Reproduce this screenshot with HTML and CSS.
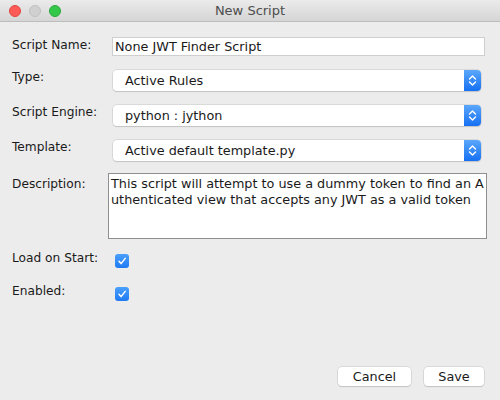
FILE: index.html
```html
<!DOCTYPE html>
<html>
<head>
<meta charset="utf-8">
<link rel="stylesheet" href="styles.css">
</head>
<body>
<div class="window">
  <div class="titlebar">
    <div class="lights">
      <span class="light red"></span>
      <span class="light gray"></span>
      <span class="light green"></span>
    </div>
    <div class="title">New Script</div>
  </div>
  <div class="form">
    <div class="row row-name">
      <label class="label">Script Name:</label>
      <div class="textfield">None JWT Finder Script</div>
    </div>
    <div class="row row-combo">
      <label class="label">Type:</label>
      <div class="combo"><span class="combo-text">Active Rules</span><span class="combo-btn"><svg width="9" height="13" viewBox="0 0 9 13"><path d="M1.5 5 L4.5 2 L7.5 5 M1.5 8 L4.5 11 L7.5 8" fill="none" stroke="#fff" stroke-width="1.4" stroke-linecap="round" stroke-linejoin="round"/></svg></span></div>
    </div>
    <div class="row row-combo">
      <label class="label">Script Engine:</label>
      <div class="combo"><span class="combo-text">python : jython</span><span class="combo-btn"><svg width="9" height="13" viewBox="0 0 9 13"><path d="M1.5 5 L4.5 2 L7.5 5 M1.5 8 L4.5 11 L7.5 8" fill="none" stroke="#fff" stroke-width="1.4" stroke-linecap="round" stroke-linejoin="round"/></svg></span></div>
    </div>
    <div class="row row-combo">
      <label class="label">Template:</label>
      <div class="combo"><span class="combo-text">Active default template.py</span><span class="combo-btn"><svg width="9" height="13" viewBox="0 0 9 13"><path d="M1.5 5 L4.5 2 L7.5 5 M1.5 8 L4.5 11 L7.5 8" fill="none" stroke="#fff" stroke-width="1.4" stroke-linecap="round" stroke-linejoin="round"/></svg></span></div>
    </div>
    <div class="row row-desc">
      <label class="label">Description:</label>
      <div class="textarea">This script will attempt to use a dummy token to find an A<br>uthenticated view that accepts any JWT as a valid token</div>
    </div>
    <div class="row row-check">
      <label class="label">Load on Start:</label>
      <span class="check"><svg width="14" height="14" viewBox="0 0 14 14"><path d="M4 7.3 L6.1 9.6 L10.2 4.4" fill="none" stroke="#fff" stroke-width="1.5" stroke-linecap="round" stroke-linejoin="round"/></svg></span>
    </div>
    <div class="row row-check">
      <label class="label">Enabled:</label>
      <span class="check"><svg width="14" height="14" viewBox="0 0 14 14"><path d="M4 7.3 L6.1 9.6 L10.2 4.4" fill="none" stroke="#fff" stroke-width="1.5" stroke-linecap="round" stroke-linejoin="round"/></svg></span>
    </div>
  </div>
  <div class="buttons">
    <button class="btn btn-cancel">Cancel</button>
    <button class="btn btn-save">Save</button>
  </div>
</div>
</body>
</html>
```
FILE: styles.css
```css
html, body {
  margin: 0;
  padding: 0;
  width: 500px;
  height: 400px;
  overflow: hidden;
  background: #ececec;
  font-family: "DejaVu Sans", "Liberation Sans", sans-serif;
  font-size: 12.2px;
  color: #1a1a1a;
}

.window {
  display: flex;
  flex-direction: column;
  height: 400px;
}

.titlebar {
  height: 21px;
  border-bottom: 1px solid #bdbdbd;
  background: linear-gradient(#ebebeb, #d5d5d5);
  display: flex;
  align-items: center;
  position: relative;
}

.lights {
  display: flex;
  gap: 8px;
  padding-left: 9px;
}

.light {
  width: 12px;
  height: 12px;
  border-radius: 50%;
  box-sizing: border-box;
}
.red { background: #fc5b57; border: 0.5px solid #e2463f; }
.gray { background: #d0d0d0; border: 0.5px solid #c0c0c0; }
.green { background: #34c84a; border: 0.5px solid #2aaa3a; }

.title {
  position: absolute;
  left: 0;
  right: 0;
  text-align: center;
  font-size: 13px;
  color: #4d4d4d;
  top: 3px;
}

.form {
  display: flex;
  flex-direction: column;
  padding-left: 12px;
}

.row {
  display: flex;
}

.label {
  width: 96px;
  flex: none;
  line-height: 16px;
}

.row-name {
  margin-top: 15px;
}

.textfield {
  margin-left: 4px;
  width: 369px;
  height: 17px;
  background: #fff;
  border: 1px solid #cfcfcf;
  line-height: 17px;
  padding-left: 2px;
  font-size: 12.8px;
}

.row-combo {
  margin-top: 14px;
}
.row-combo .label { margin-top: -1px; }

.combo {
  margin-left: 5px;
  width: 368px;
  height: 21px;
  box-sizing: border-box;
  background: #fff;
  border-radius: 4px;
  box-shadow: 0 0 0 0.5px #c6c6c6, 0 1px 1px rgba(0,0,0,0.18);
  display: flex;
  align-items: center;
  justify-content: space-between;
}

.combo-text {
  padding-left: 12px;
  font-size: 12.8px;
}

.combo-btn {
  width: 17px;
  height: 21px;
  border-radius: 0 4px 4px 0;
  background: linear-gradient(#5aa7fb, #1670f2);
  display: flex;
  align-items: center;
  justify-content: center;
}

.row-desc {
  margin-top: 12px;
}
.row-desc .label { padding-top: 3px; }

.textarea {
  width: 375px;
  height: 62px;
  background: #fff;
  border: 1px solid #8f8f8f;
  padding: 2px 0 0 2px;
  line-height: 16px;
  font-size: 12.8px;
}

.row-check {
  margin-top: 14px;
}
.row-check + .row-check { margin-top: 18px; }
.row-check .label { margin-top: -3px; }

.check {
  margin-top: 1px;
  margin-left: 7px;
  width: 14px;
  height: 14px;
  border-radius: 3px;
  background: linear-gradient(#4aa0fb, #1f7af3);
  display: flex;
}

.buttons {
  margin-top: auto;
  margin-bottom: 14px;
  display: flex;
  justify-content: flex-end;
  gap: 13px;
  padding-right: 16px;
}

.btn {
  font-family: "DejaVu Sans", "Liberation Sans", sans-serif;
  font-size: 12.8px;
  color: #1a1a1a;
  height: 19px;
  background: #fff;
  border: none;
  border-radius: 4px;
  box-shadow: 0 0 0 0.5px #c6c6c6, 0 1px 1px rgba(0,0,0,0.18);
  padding: 0;
}
.btn-cancel { width: 73px; }
.btn-save { width: 60px; }
```
